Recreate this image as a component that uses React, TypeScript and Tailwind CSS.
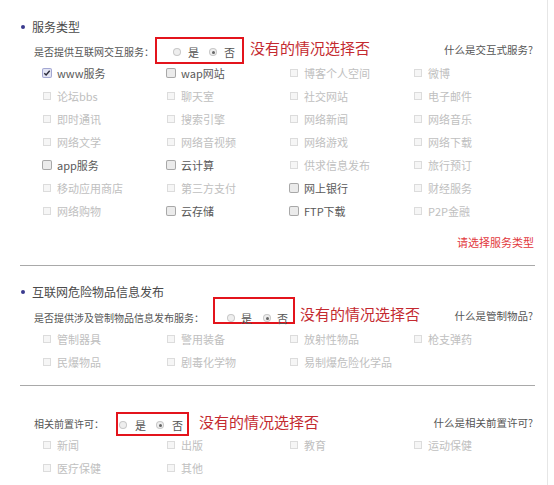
import React from 'react';

type Item = { label: string; on?: boolean; checked?: boolean };

const serviceRows: Item[][] = [
  [{ label: 'www服务', on: true, checked: true }, { label: 'wap网站', on: true }, { label: '博客个人空间' }, { label: '微博' }],
  [{ label: '论坛bbs' }, { label: '聊天室' }, { label: '社交网站' }, { label: '电子邮件' }],
  [{ label: '即时通讯' }, { label: '搜索引擎' }, { label: '网络新闻' }, { label: '网络音乐' }],
  [{ label: '网络文学' }, { label: '网络音视频' }, { label: '网络游戏' }, { label: '网络下载' }],
  [{ label: 'app服务', on: true }, { label: '云计算', on: true }, { label: '供求信息发布' }, { label: '旅行预订' }],
  [{ label: '移动应用商店' }, { label: '第三方支付' }, { label: '网上银行', on: true }, { label: '财经服务' }],
  [{ label: '网络购物' }, { label: '云存储', on: true }, { label: 'FTP下载', on: true }, { label: 'P2P金融' }],
];

const dangerRows: Item[][] = [
  [{ label: '管制器具' }, { label: '警用装备' }, { label: '放射性物品' }, { label: '枪支弹药' }],
  [{ label: '民爆物品' }, { label: '剧毒化学物' }, { label: '易制爆危险化学品' }],
];

const permitRows: Item[][] = [
  [{ label: '新闻' }, { label: '出版' }, { label: '教育' }, { label: '运动保健' }],
  [{ label: '医疗保健' }, { label: '其他' }],
];

function Checkbox({ on, checked }: { on?: boolean; checked?: boolean }) {
  if (checked) {
    return (
      <span className="w-[10px] h-[10px] rounded-[2px] p-px bg-[#a3a7d2] flex">
        <span className="flex-1 rounded-[1px] bg-[#e3e5f4] flex items-center justify-center">
          <svg width="8" height="8" viewBox="0 0 8 8">
            <path d="M1.3 4.2 L3.1 6 L6.7 1.8" fill="none" stroke="#2b2b3a" strokeWidth="1.4" />
          </svg>
        </span>
      </span>
    );
  }
  if (on) {
    return (
      <span className="w-[10px] h-[10px] rounded-[2px] p-px bg-[#a8a8a8] flex">
        <span className="flex-1 rounded-[1px] bg-[#ebebeb]" />
      </span>
    );
  }
  return (
    <span className="ml-[1px] w-[8px] h-[8px] p-px bg-[#dcdcdc] flex">
      <span className="flex-1 bg-[#f6f6f6]" />
    </span>
  );
}

function Grid({ rows }: { rows: Item[][] }) {
  return (
    <div className="pl-[22px]">
      {rows.map((row, i) => (
        <div key={i} className="grid grid-cols-[124px_123px_124px_110px] h-[23px] items-center">
          {row.map((it) => (
            <div key={it.label} className="flex items-center">
              <span className="w-[15px] flex items-center">
                <Checkbox on={it.on} checked={it.checked} />
              </span>
              <span className={`text-[11px] leading-[14px] whitespace-nowrap ${it.on ? 'text-[#595959]' : 'text-[#c0c0c0]'}`}>
                {it.label}
              </span>
            </div>
          ))}
        </div>
      ))}
    </div>
  );
}

function Radio({ selected }: { selected?: boolean }) {
  return (
    <span className="w-[8px] h-[8px] rounded-full p-px bg-[#c8c8c8] flex">
      <span className="flex-1 rounded-full bg-[#eeeeee] flex items-center justify-center">
        {selected && <span className="w-[3px] h-[3px] rounded-full bg-[#666]" />}
      </span>
    </span>
  );
}

function Title({ text }: { text: string }) {
  return (
    <div className="h-5 flex items-center">
      <span className="ml-[1px] w-[4px] h-[4px] rounded-full bg-[#3a3a8e]" />
      <span className="ml-[7px] text-[12px] leading-[16px] text-[#4a4a4a]">{text}</span>
    </div>
  );
}

const Note = ({ className }: { className: string }) => (
  <span className={`text-[15px] leading-[18px] text-[#c42a30] whitespace-nowrap ${className}`}>没有的情况选择否</span>
);

export default function App() {
  return (
    <div className="w-[554px] h-[485px] bg-white overflow-hidden font-['Noto_Sans_CJK_SC','Microsoft_YaHei',sans-serif]">
      <div className="w-[548px] h-full border-r border-[#e6e6e6] pl-[20px]">
        <div className="w-[515px] pt-[17px]">
          {/* 服务类型 */}
          <Title text="服务类型" />
          <div className="mt-[5px] h-[19px] flex items-center">
            <span className="w-[135px] pl-[14px] text-[10px] leading-[14px] text-[#555] whitespace-nowrap">是否提供互联网交互服务：</span>
            <span className="self-start -mt-[5px] h-[27px] w-[89px] border-2 border-[#e3141c] flex items-center pt-[3px] pl-[16px] text-[11px] text-[#555] leading-[14px]">
              <Radio />
              <span className="ml-[7px]">是</span>
              <span className="ml-[10px]"><Radio selected /></span>
              <span className="ml-[7px]">否</span>
            </span>
            <Note className="ml-[6px] mb-[8px]" />
            <span className="ml-auto pr-[2px] mb-[3px] text-[10.5px] leading-[14px] text-[#555]">什么是交互式服务?</span>
          </div>
          <Grid rows={serviceRows} />
          <div className="mt-[10px] h-5 flex items-center justify-end pr-[1px]">
            <span className="text-[11px] leading-[14px] text-[#e2383c]">请选择服务类型</span>
          </div>
          <div className="mt-[13px] h-px bg-[#a9a9a9]" />

          {/* 互联网危险物品信息发布 */}
          <div className="mt-4">
            <Title text="互联网危险物品信息发布" />
          </div>
          <div className="mt-[6px] h-[19px] flex items-center">
            <span className="w-[193px] pl-[14px] text-[10px] leading-[14px] text-[#555] whitespace-nowrap">是否提供涉及管制物品信息发布服务：</span>
            <span className="self-start -mt-[11px] h-[27px] w-[82px] border-2 border-[#e3141c] flex items-center pt-[15px] pl-[12px] text-[11px] text-[#555] leading-[14px]">
              <Radio />
              <span className="ml-[6px]">是</span>
              <span className="ml-[11px]"><Radio selected /></span>
              <span className="ml-[6px]">否</span>
            </span>
            <Note className="ml-[5px] mb-[8px]" />
            <span className="ml-auto pr-[2px] mb-[4px] text-[10.5px] leading-[14px] text-[#555]">什么是管制物品?</span>
          </div>
          <Grid rows={dangerRows} />
          <div className="mt-3 h-px bg-[#a9a9a9]" />

          {/* 相关前置许可 */}
          <div className="mt-[28px] h-[19px] flex items-center">
            <span className="w-[96px] pl-[14px] text-[10px] leading-[14px] text-[#555] whitespace-nowrap">相关前置许可：</span>
            <span className="self-start -mt-[2px] h-[24px] w-[73px] border-2 border-[#e3141c] flex items-center pt-[2px] pl-[1px] text-[11px] text-[#555] leading-[14px]">
              <Radio />
              <span className="ml-[8px]">是</span>
              <span className="ml-[10px]"><Radio selected /></span>
              <span className="ml-[8px]">否</span>
            </span>
            <Note className="ml-[10px] mb-[4px]" />
            <span className="ml-auto pr-[2px] mb-[2px] text-[10.5px] leading-[14px] text-[#555]">什么是相关前置许可?</span>
          </div>
          <Grid rows={permitRows} />
        </div>
      </div>
    </div>
  );
}
